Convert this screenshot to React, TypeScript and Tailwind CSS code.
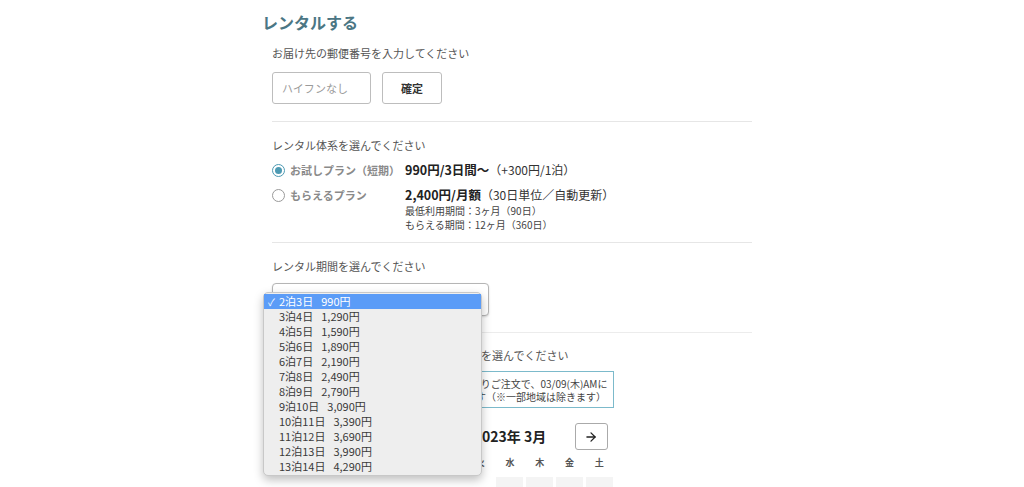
import { ArrowLeft, ArrowRight } from 'lucide-react';

const FONT = { fontFamily: '"Noto Sans CJK JP", "Noto Sans", sans-serif' };

const PERIODS = [
  ['2泊3日', '990円'],
  ['3泊4日', '1,290円'],
  ['4泊5日', '1,590円'],
  ['5泊6日', '1,890円'],
  ['6泊7日', '2,190円'],
  ['7泊8日', '2,490円'],
  ['8泊9日', '2,790円'],
  ['9泊10日', '3,090円'],
  ['10泊11日', '3,390円'],
  ['11泊12日', '3,690円'],
  ['12泊13日', '3,990円'],
  ['13泊14日', '4,290円'],
];

const WEEKDAYS = ['日', '月', '火', '水', '木', '金', '土'];

function Radio({ checked }: { checked?: boolean }) {
  return (
    <span
      className={`flex h-[13px] w-[13px] shrink-0 items-center justify-center rounded-full border-[1.5px] ${
        checked ? 'border-[#4d9ab3]' : 'border-[#9a9a9a]'
      }`}
    >
      {checked && <span className="h-[7px] w-[7px] rounded-full bg-[#4d9ab3]" />}
    </span>
  );
}

function Label({ children }: { children: React.ReactNode }) {
  return <p className="text-[11px] leading-[16px] text-[#555]">{children}</p>;
}

function PeriodMenu() {
  return (
    <div className="absolute left-[-9px] top-[9px] z-10 w-[219px] rounded-[5px] border border-[#c8c8c8] bg-[#eeeeee] py-px shadow-[0_4px_10px_rgba(0,0,0,0.25)]">
      {PERIODS.map(([nights, price], i) => (
        <div
          key={nights}
          className={`flex h-[15px] items-center whitespace-nowrap text-[11px] leading-[15px] ${
            i === 0 ? 'bg-[#5b9cf7] text-white' : 'text-[#3a3a3a]'
          }`}
        >
          <span className="w-[15px] pl-[4px] text-[10px]">{i === 0 ? '✓' : ''}</span>
          <span>{nights}</span>
          <span className="ml-[8px]">{price}</span>
        </div>
      ))}
    </div>
  );
}

export default function App() {
  return (
    <div className="h-[487px] overflow-hidden bg-white" style={FONT}>
      <div className="mx-auto w-[500px]">
        <h1 className="pt-[10px] text-[16px] font-bold leading-[24px] text-[#4b7684]">レンタルする</h1>

        <div className="px-[10px]">
          {/* 郵便番号 */}
          <div className="mt-[11px]">
            <Label>お届け先の郵便番号を入力してください</Label>
            <div className="mt-[11px] flex gap-[11px]">
              <div className="flex h-[32px] w-[99px] items-center rounded-[3px] border border-[#bdbdbd] px-[9px] text-[11px] text-[#9a9a9a]">
                ハイフンなし
              </div>
              <button className="h-[32px] w-[60px] rounded-[3px] border border-[#bdbdbd] bg-white text-[11px] font-bold text-[#333]">
                確定
              </button>
            </div>
          </div>

          <div className="mt-[17px] border-t border-[#e6e6e6]" />

          {/* プラン */}
          <div className="mt-[15px]">
            <Label>レンタル体系を選んでください</Label>
            <div className="mt-[7px] flex h-[20px] items-center">
              <Radio checked />
              <span className="ml-[5px] w-[115px] text-[11px] font-bold text-[#8a8a8a]">お試しプラン（短期）</span>
              <span className="text-[12.5px] font-bold text-[#222]">990円/3日間〜</span>
              <span className="text-[12px] text-[#333]">（+300円/1泊）</span>
            </div>
            <div className="mt-[5px] flex h-[20px] items-center">
              <Radio />
              <span className="ml-[5px] w-[115px] text-[11px] font-bold text-[#8a8a8a]">もらえるプラン</span>
              <span className="text-[12.5px] font-bold text-[#222]">2,400円/月額</span>
              <span className="text-[12px] text-[#333]">（30日単位／自動更新）</span>
            </div>
            <div className="-mt-px pl-[133px] text-[10px] leading-[14px] text-[#444]">
              <p>最低利用期間：3ヶ月（90日）</p>
              <p>もらえる期間：12ヶ月（360日）</p>
            </div>
          </div>

          <div className="mt-[10px] border-t border-[#e6e6e6]" />

          {/* 期間 */}
          <div className="mt-[15px]">
            <Label>レンタル期間を選んでください</Label>
            <div className="relative mt-[9px] w-[217px]">
              <div className="h-[33px] rounded-[4px] border border-[#b5b5b5] bg-white shadow-[0_1px_2px_rgba(0,0,0,0.15)]" />
              <PeriodMenu />
            </div>
          </div>

          <div className="mt-[16px] border-t border-[#ececec]" />

          {/* お届け日 */}
          <div className="mt-[14px]">
            <Label>ご希望のお届け予定日（レンタル開始日）を選んでください</Label>
            <div className="ml-[134px] mt-[8px] w-[208px]">
              <div className="h-[37px] overflow-hidden whitespace-nowrap border border-[#7cbacb] px-[9px] pt-[5px] text-[10px] leading-[13px] text-[#444]">
                <p>本日の12:00よりご注文で、03/09(木)AMに</p>
                <p>お届けできます（※一部地域は除きます）</p>
              </div>

              <div className="mt-[15px] flex h-[27px] items-center justify-between px-[6px]">
                <button className="flex h-[27px] w-[33px] items-center justify-center rounded-[3px] border border-[#aaa] bg-white">
                  <ArrowLeft size={14} strokeWidth={2.2} color="#222" />
                </button>
                <span className="text-[14px] font-bold text-[#222]">2023年 3月</span>
                <button className="flex h-[27px] w-[33px] items-center justify-center rounded-[3px] border border-[#aaa] bg-white">
                  <ArrowRight size={14} strokeWidth={2.2} color="#222" />
                </button>
              </div>

              <div className="mt-[6px] grid grid-cols-7">
                {WEEKDAYS.map((d) => (
                  <span key={d} className="text-center text-[9px] font-bold leading-[14px] text-[#555]">
                    {d}
                  </span>
                ))}
              </div>
              <div className="mt-[7px] grid grid-cols-7">
                {[null, null, null, 1, 2, 3, 4].map((n, i) => (
                  <div key={i} className="flex justify-center">
                    {n !== null && (
                      <div className="flex h-[27px] w-[27px] items-center justify-center bg-[#f4f4f4] text-[10px] text-[#bbb]">
                        {n}
                      </div>
                    )}
                  </div>
                ))}
              </div>
            </div>
          </div>
        </div>
      </div>
    </div>
  );
}
